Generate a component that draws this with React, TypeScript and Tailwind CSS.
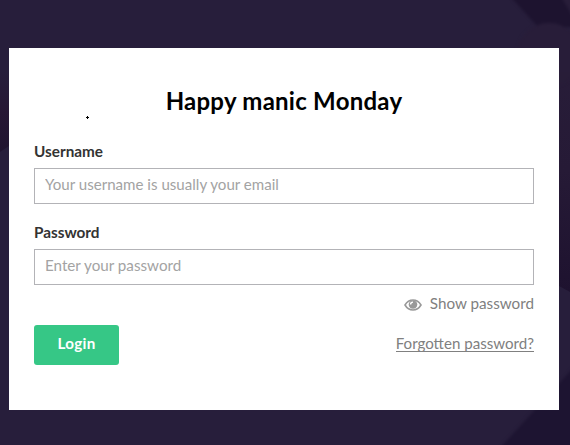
export default function App() {
  return (
    <div className="relative h-[445px] w-[570px] overflow-hidden bg-[#271e3b] px-[9px] pt-12 font-['Lato',sans-serif]">
      <svg className="absolute inset-0" width="570" height="445" viewBox="0 0 570 445">
        <defs>
          <filter id="soft" colorInterpolationFilters="sRGB"><feGaussianBlur stdDeviation="1.5" /></filter>
          <linearGradient id="left" x2="0" y2="1">
            <stop stopColor="#271e3b" /><stop offset=".5" stopColor="#271734" /><stop offset="1" stopColor="#20142f" />
          </linearGradient>
          <linearGradient id="right" x2="0" y2="1">
            <stop stopColor="#281d39" /><stop offset=".5" stopColor="#261a36" /><stop offset="1" stopColor="#1e122f" />
          </linearGradient>
          <linearGradient id="disc" x2="0" y2="1">
            <stop stopColor="#281d39" /><stop offset="1" stopColor="#281d38" />
          </linearGradient>
        </defs>
        <path d="M0 72H9V146L0 152Z" fill="url(#left)" />
        <path d="M559 48H570V292L559 286Z" fill="url(#right)" />
        <g filter="url(#soft)">
          <path d="M509-5 538 27H575V-5Z" fill="#1d132f" />
          <path d="M560-5 575 20V-5Z" fill="#281d39" />
          <circle cx="549" cy="55" r="32" fill="url(#disc)" />
          <path d="M575 366 500 448H575Z" fill="#1d1431" />
        </g>
      </svg>
      <form className="relative h-[362px] w-[550px] bg-white px-[25px] pt-[36px]">
        <svg className="absolute left-[77px] top-[68px]" width="3" height="3" viewBox="0 0 3 3"><path d="M1 0H2V1H3V2H2V3H1V2H0V1H1Z" fill="#000" shapeRendering="crispEdges" /></svg>
        <h1 className="text-center text-[24px] font-bold leading-[34px] tracking-[0.25px] text-black">Happy manic Monday</h1>
        <label className="mt-[23px] block text-[15.3px] font-bold leading-5 text-[#333]">Username</label>
        <input className="mt-[7px] block h-[36px] w-full border border-[#b3b3b7] px-[10px] pb-[5px] text-[15.1px] placeholder:text-[#a3a3a3]" placeholder="Your username is usually your email" />
        <label className="mt-[18px] block text-[15.3px] font-bold leading-5 text-[#333]">Password</label>
        <input className="mt-[7px] block h-[36px] w-full border border-[#b3b3b7] px-[10px] pb-[5px] text-[15.2px] placeholder:text-[#a3a3a3]" placeholder="Enter your password" />
        <div className="mt-2 flex items-center justify-end gap-2 text-[15.22px] leading-5 text-[#808080]">
          <svg className="mt-[3px]" width="18" height="12" viewBox="0 0 18 12" fill="none">
            <path d="M1 6C5-.7 13-.7 17 6 13 12.700 5 12.700 1 6Z" stroke="#999" strokeWidth="1.600" />
            <circle cx="9" cy="5.500" r="4.300" fill="#999" />
            <path d="M6.600 5.500A2.400 2.400 0 0 1 9 3.100" stroke="white" strokeWidth="1.400" />
          </svg>
          <span>Show password</span>
        </div>
        <div className="mt-3 flex items-center justify-between">
          <button type="button" className="h-10 w-[85px] rounded-[3px] bg-[#36c786] pb-[3px] text-[15.2px] font-bold tracking-[0.3px] text-white">Login</button>
          <a className="mb-[3px] h-[17px] border-b border-[#808080] text-[15.12px] leading-4 text-[#808080]">Forgotten password?</a>
        </div>
      </form>
    </div>
  );
}
